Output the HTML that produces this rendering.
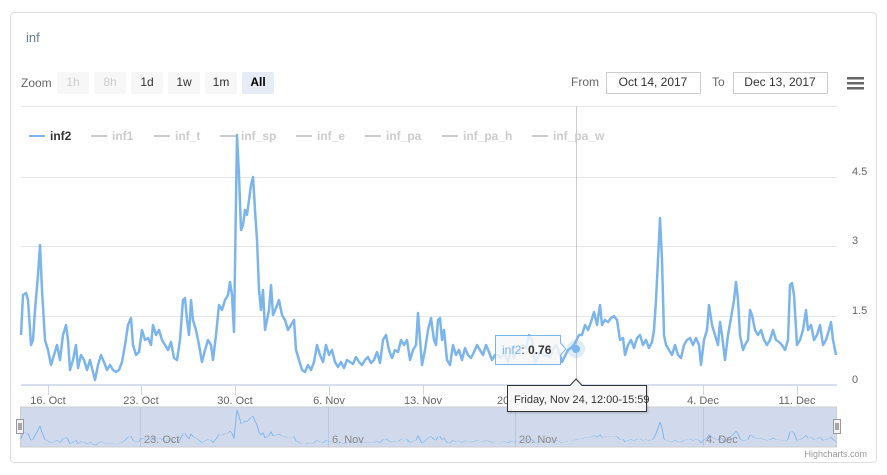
<!DOCTYPE html>
<html><head><meta charset="utf-8"><style>
body{margin:0;background:#fff;font-family:"Liberation Sans",sans-serif;}
</style></head><body>
<svg width="887" height="475" xmlns="http://www.w3.org/2000/svg" style="display:block;font-family:'Liberation Sans',sans-serif">
<defs><polyline id="ln" fill="none" points="21,335 23,295 26,293 28,300 31,345 33,340 35,310 38,275 40,245 42,290 45,340 48,350 51,365 54,355 57,345 60,360 63,335 66,325 68,340 70,370 73,360 76,345 78,368 81,355 84,360 87,370 90,360 93,372 95,380 98,365 101,355 104,362 107,370 110,365 113,370 116,372 119,370 122,362 125,345 128,325 131,318 133,345 136,355 139,352 142,330 145,340 148,338 151,345 153,325 156,335 159,330 162,340 165,345 168,350 171,342 174,358 177,360 180,340 183,300 185,298 187,320 189,335 191,300 193,320 196,330 199,345 202,362 205,350 208,340 211,345 213,360 216,335 219,305 222,310 225,300 228,295 230,282 232,295 234,332 236,200 237,135 239,175 241,230 243,225 245,210 247,215 249,200 251,185 253,177 255,210 257,240 259,290 261,310 263,290 265,330 267,320 269,310 271,285 273,315 276,308 279,300 282,315 285,320 288,330 291,325 294,320 296,350 299,360 302,370 305,372 308,365 311,370 314,362 317,345 320,355 323,362 326,345 329,355 332,350 335,362 338,367 341,362 344,368 347,360 350,362 353,364 356,357 359,362 362,365 365,360 368,357 371,363 374,360 377,352 380,363 383,340 386,335 389,350 392,358 395,350 398,352 401,340 404,345 407,340 410,360 413,350 416,345 418,313 420,340 422,365 425,350 428,330 431,318 434,340 436,345 438,320 440,318 442,340 444,330 447,360 450,365 453,345 456,355 459,350 462,360 465,348 468,355 471,358 474,352 477,345 480,350 483,355 486,345 489,352 492,360 495,355 498,355 501,358 504,352 508,362 511,350 514,358 517,350 520,352 523,345 526,348 529,335 532,340 535,362 538,358 541,350 544,356 547,355 550,358 553,350 556,345 559,352 562,362 565,356 568,350 571,348 574,345 576,341 579,335 582,335 585,325 588,330 591,322 594,312 597,325 600,305 602,325 605,320 608,322 611,318 614,316 617,320 620,340 623,338 625,355 628,345 631,340 634,348 637,338 640,335 643,345 646,340 649,348 652,342 654,330 656,300 658,260 660,218 662,260 664,335 666,345 669,350 672,355 675,345 678,355 681,358 684,345 687,340 690,338 693,345 696,338 699,345 701,365 704,340 707,330 709,305 712,325 715,335 718,345 720,322 722,335 725,360 728,335 731,318 734,300 736,282 738,300 740,335 743,350 745,345 748,340 750,310 752,315 755,330 758,335 761,330 764,340 767,345 770,340 773,330 776,340 779,342 782,345 785,350 788,340 790,285 792,283 794,295 797,345 800,340 803,330 806,310 808,330 811,325 814,340 817,335 820,325 823,345 826,340 829,330 831,322 833,340 836,355"/></defs>
<rect x="10.5" y="12.5" width="866" height="450" rx="4" fill="#fff" stroke="#ddd"/>
<text x="26" y="42" font-size="13" fill="#6b7e94">inf</text>
<text x="21" y="87" font-size="12" fill="#666">Zoom</text>
<g font-size="12" text-anchor="middle">
<rect x="57" y="72" width="32" height="22" rx="2" fill="#f7f7f7"/><text x="73" y="86" fill="#ccc">1h</text>
<rect x="94" y="72" width="32" height="22" rx="2" fill="#f7f7f7"/><text x="110" y="86" fill="#ccc">8h</text>
<rect x="131" y="72" width="32" height="22" rx="2" fill="#f7f7f7"/><text x="147" y="86" fill="#333">1d</text>
<rect x="168" y="72" width="32" height="22" rx="2" fill="#f7f7f7"/><text x="184" y="86" fill="#333">1w</text>
<rect x="205" y="72" width="32" height="22" rx="2" fill="#f7f7f7"/><text x="221" y="86" fill="#333">1m</text>
<rect x="242" y="72" width="32" height="22" rx="2" fill="#e6ebf5"/><text x="258" y="86" fill="#000" font-weight="bold">All</text>
</g>
<text x="571" y="86" font-size="12" fill="#666">From</text>
<rect x="606.5" y="72.5" width="94" height="21" fill="#fff" stroke="#ccc"/>
<text x="653" y="86" font-size="12" fill="#333" text-anchor="middle">Oct 14, 2017</text>
<text x="712" y="86" font-size="12" fill="#666">To</text>
<rect x="733.5" y="72.5" width="94" height="21" fill="#fff" stroke="#ccc"/>
<text x="780" y="86" font-size="12" fill="#333" text-anchor="middle">Dec 13, 2017</text>
<g fill="#666"><rect x="847" y="77" width="17" height="2.5"/><rect x="847" y="82" width="17" height="2.5"/><rect x="847" y="87" width="17" height="2.5"/></g>
<g stroke="#e6e6e6"><line x1="21" y1="106.5" x2="837" y2="106.5"/><line x1="21" y1="177.5" x2="837" y2="177.5"/><line x1="21" y1="246.5" x2="837" y2="246.5"/><line x1="21" y1="316.5" x2="837" y2="316.5"/></g>
<line x1="21" y1="385" x2="837" y2="385" stroke="#ccd6eb" stroke-width="1.5"/>
<g font-size="11" fill="#666"><text x="852" y="175">4.5</text><text x="852" y="244">3</text><text x="852" y="314">1.5</text><text x="852" y="383">0</text></g>
<g font-size="12" font-weight="bold">
<line x1="29" y1="136" x2="45" y2="136" stroke="#7cb5ec" stroke-width="2"/><text x="50" y="140" fill="#333">inf2</text>
<g fill="#ccc" stroke="#ccc" stroke-width="2"><line x1="91" y1="136" x2="107" y2="136"/><line x1="154" y1="136" x2="170" y2="136"/><line x1="220" y1="136" x2="236" y2="136"/><line x1="296" y1="136" x2="312" y2="136"/><line x1="365" y1="136" x2="381" y2="136"/><line x1="442" y1="136" x2="458" y2="136"/><line x1="532" y1="136" x2="548" y2="136"/></g>
<g fill="#ccc"><text x="112" y="140">inf1</text><text x="175" y="140">inf_t</text><text x="241" y="140">inf_sp</text><text x="317" y="140">inf_e</text><text x="386" y="140">inf_pa</text><text x="463" y="140">inf_pa_h</text><text x="553" y="140">inf_pa_w</text></g>
</g>
<line x1="576.5" y1="106" x2="576.5" y2="385" stroke="#ccc"/>
<use href="#ln" stroke="#7cb5ec" stroke-width="2.5" stroke-linejoin="round"/>
<circle cx="576" cy="349" r="9" fill="#7cb5ec" opacity="0.25"/><circle cx="576" cy="349" r="4" fill="#7cb5ec"/>
<path d="M495.5 335.5 H560.5 V343 L566 349 L560.5 355 V364.5 H495.5 Z" fill="#f7f7f7" fill-opacity="0.85" stroke="#7cb5ec"/>
<text x="502" y="354" font-size="12"><tspan fill="#7cb5ec">inf2</tspan><tspan fill="#333">: </tspan><tspan fill="#333" font-weight="bold">0.76</tspan></text>
<g stroke="#ccd6eb"><line x1="48.5" y1="385" x2="48.5" y2="395"/><line x1="141.5" y1="385" x2="141.5" y2="395"/><line x1="235.5" y1="385" x2="235.5" y2="395"/><line x1="329.5" y1="385" x2="329.5" y2="395"/><line x1="423.5" y1="385" x2="423.5" y2="395"/><line x1="703.5" y1="385" x2="703.5" y2="395"/><line x1="797.5" y1="385" x2="797.5" y2="395"/></g>
<g font-size="11" fill="#666" text-anchor="middle"><text x="48" y="404">16. Oct</text><text x="141" y="404">23. Oct</text><text x="235" y="404">30. Oct</text><text x="329" y="404">6. Nov</text><text x="423" y="404">13. Nov</text><text x="516" y="404">20. Nov</text><text x="703" y="404">4. Dec</text><text x="797" y="404">11. Dec</text></g>
<rect x="20.5" y="407" width="816" height="40" fill="#d1daec" stroke="#ccc"/>
<g stroke="#bfc8db"><line x1="140.5" y1="407" x2="140.5" y2="447"/><line x1="328.5" y1="407" x2="328.5" y2="447"/><line x1="515.5" y1="407" x2="515.5" y2="447"/><line x1="703.5" y1="407" x2="703.5" y2="447"/></g>
<use href="#ln" stroke="#7cb5ec" stroke-width="1" vector-effect="non-scaling-stroke" transform="translate(0,390.6) scale(1,0.144)"/>
<g font-size="11" fill="#888"><text x="144" y="443">23. Oct</text><text x="332" y="443">6. Nov</text><text x="519" y="443">20. Nov</text><text x="706" y="443">4. Dec</text></g>
<g fill="#f2f2f2" stroke="#999"><rect x="16.5" y="419.5" width="7" height="14"/><rect x="833.5" y="419.5" width="7" height="14"/></g>
<g stroke="#333" stroke-width="0.8"><line x1="19" y1="423" x2="19" y2="430"/><line x1="21" y1="423" x2="21" y2="430"/><line x1="836" y1="423" x2="836" y2="430"/><line x1="838" y1="423" x2="838" y2="430"/></g>
<path d="M507.5 385.5 H570 L576 379 L582 385.5 H646.5 V411.5 H507.5 Z" fill="#f7f7f7" stroke="#333" filter="drop-shadow(1px 1px 1px rgba(0,0,0,0.2))"/>
<text x="514" y="403" font-size="11" fill="#333">Friday, Nov 24, 12:00-15:59</text>
<text x="867" y="457" font-size="9" fill="#999" text-anchor="end">Highcharts.com</text>
</svg>
</body></html>
